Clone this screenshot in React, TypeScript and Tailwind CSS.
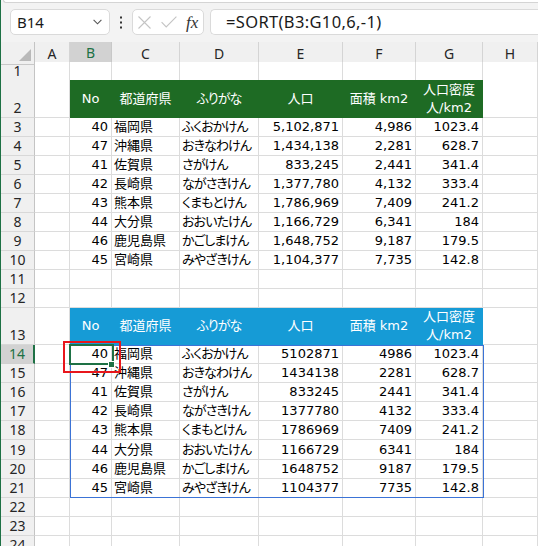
import React from "react";

const DATA = [
  ["40", "福岡県", "ふくおかけん", "5,102,871", "4,986", "1023.4"],
  ["47", "沖縄県", "おきなわけん", "1,434,138", "2,281", "628.7"],
  ["41", "佐賀県", "さがけん", "833,245", "2,441", "341.4"],
  ["42", "長崎県", "ながさきけん", "1,377,780", "4,132", "333.4"],
  ["43", "熊本県", "くまもとけん", "1,786,969", "7,409", "241.2"],
  ["44", "大分県", "おおいたけん", "1,166,729", "6,341", "184"],
  ["46", "鹿児島県", "かごしまけん", "1,648,752", "9,187", "179.5"],
  ["45", "宮崎県", "みやざきけん", "1,104,377", "7,735", "142.8"],
];

const G = "grid grid-cols-[34px_35px_42px_68px_79px_84px_73px_67px_1fr]";
const FONT =
  "font-['DejaVu_Sans','Noto_Sans_CJK_JP',sans-serif] [font-feature-settings:'palt']";

type Kind = "plain" | "green" | "blue";

function Cell({
  t = "",
  a = "l",
  k = "plain",
  kana = false,
}: {
  t?: string;
  a?: "l" | "r" | "c";
  k?: Kind;
  kana?: boolean;
}) {
  const base =
    k === "green"
      ? "bg-[#1e6b24] border-[#1e6b24] text-white"
      : k === "blue"
      ? "bg-[#169bd6] border-[#169bd6] text-white"
      : "bg-white border-[#dcdcdc] text-black";
  const al =
    a === "c"
      ? "justify-center text-center"
      : a === "r"
      ? "justify-end pr-[3px]"
      : "justify-start pl-[2px]";
  return (
    <div
      className={`flex items-center border-r border-b whitespace-nowrap text-[13px] leading-[18px] ${FONT} ${base} ${al} ${
        kana ? "tracking-[-0.9px]" : ""
      }`}
    >
      {t}
    </div>
  );
}

function RowHead({ n, active = false }: { n: number; active?: boolean }) {
  return (
    <div
      className={
        active
          ? "flex items-end justify-center border-b border-[#d0d0d0] border-r-2 border-r-[#1e7145] bg-[#d2d2d2] text-[#1e7145] font-['Noto_Sans',sans-serif] text-[14px] leading-[18px]"
          : "flex items-end justify-center border-b border-[#d8d8d8] border-r border-r-[#c4c4c4] bg-[#f0f0f0] text-[#262626] font-['Noto_Sans',sans-serif] text-[14px] leading-[18px]"
      }
    >
      {n}
    </div>
  );
}

function EmptyRow({ n, h }: { n: number; h: string }) {
  return (
    <div className={`${G} ${h}`}>
      <RowHead n={n} />
      <Cell />
      <Cell />
      <Cell />
      <Cell />
      <Cell />
      <Cell />
      <Cell />
      <Cell />
    </div>
  );
}

function HeaderRow({ n, k, h }: { n: number; k: Kind; h: string }) {
  return (
    <div className={`${G} ${h}`}>
      <RowHead n={n} />
      <Cell />
      <Cell t="No" a="c" k={k} />
      <Cell t="都道府県" a="c" k={k} />
      <Cell t="ふりがな" a="c" k={k} kana />
      <Cell t="人口" a="c" k={k} />
      <Cell t="面積 km2" a="c" k={k} />
      <div
        className={`flex flex-col items-center justify-center border-r border-b text-[13px] leading-[18px] text-white ${FONT} ${
          k === "green"
            ? "bg-[#1e6b24] border-[#1e6b24]"
            : "bg-[#169bd6] border-[#169bd6]"
        }`}
      >
        <span>人口密度</span>
        <span>人/km2</span>
      </div>
      <Cell />
    </div>
  );
}

function DataRow({
  n,
  r,
  h,
  raw = false,
  active = false,
}: {
  n: number;
  r: string[];
  h: string;
  raw?: boolean;
  active?: boolean;
}) {
  const clean = (s: string) => (raw ? s.replace(/,/g, "") : s);
  return (
    <div className={`${G} ${h}`}>
      <RowHead n={n} active={active} />
      <Cell />
      <Cell t={r[0]} a="r" />
      <Cell t={r[1]} />
      <Cell t={r[2]} kana />
      <Cell t={clean(r[3])} a="r" />
      <Cell t={clean(r[4])} a="r" />
      <Cell t={r[5]} a="r" />
      <Cell />
    </div>
  );
}

function ColHead({ l, active = false }: { l: string; active?: boolean }) {
  return (
    <div
      className={
        active
          ? "flex items-center justify-center bg-[#d2d2d2] border-r border-r-[#c8c8c8] border-b-2 border-b-[#1e7145] text-[#1e7145] font-['Noto_Sans',sans-serif] text-[14px]"
          : "flex items-center justify-center bg-[#f0f0f0] border-r border-r-[#d4d4d4] border-b border-b-[#c8c8c8] text-[#262626] font-['Noto_Sans',sans-serif] text-[14px]"
      }
    >
      {l}
    </div>
  );
}

export default function App() {
  return (
    <div className="flex w-[538px] h-[546px] overflow-hidden bg-[#f3f3f3]">
      <div className="w-px shrink-0 bg-[#1e7145]" />
      <div className="relative flex-1 flex flex-col">
        {/* formula bar */}
        <div className="h-[42px] shrink-0 bg-[#f3f3f3]">
          <div className="ml-[2px] h-[3px] bg-white border-b border-l border-[#d4d4d4] rounded-bl-[4px]" />
          <div className="flex items-center mt-[6px] h-[26px]">
            <div className="ml-[9px] w-[100px] h-[26px] shrink-0 bg-white border border-[#dadada] rounded-[5px] flex items-center justify-between pl-[6px] pr-[6px]">
              <span className="font-['Noto_Sans',sans-serif] text-[15px] text-[#1a1a1a] leading-none">
                B14
              </span>
              <svg width="9" height="6" viewBox="0 0 9 6" className="mr-px">
                <path d="M0.6 0.8 L4.5 4.8 L8.4 0.8" fill="none" stroke="#555" strokeWidth="1.1" />
              </svg>
            </div>
            <div className="w-[22px] shrink-0 flex justify-center">
              <svg width="4" height="13" viewBox="0 0 4 13">
                <rect x="1" y="0.5" width="2" height="2" fill="#333" />
                <rect x="1" y="5.5" width="2" height="2" fill="#333" />
                <rect x="1" y="10.5" width="2" height="2" fill="#333" />
              </svg>
            </div>
            <div className="w-[72px] h-[26px] shrink-0 bg-white border border-[#dadada] rounded-[5px] flex items-center">
              <svg width="13" height="13" viewBox="0 0 13 13" className="ml-[5px]">
                <path d="M0.5 0.5 L12.5 12.5 M12.5 0.5 L0.5 12.5" stroke="#c4c4c4" strokeWidth="1.1" fill="none" />
              </svg>
              <svg width="16" height="12" viewBox="0 0 16 12" className="ml-[10px]">
                <path d="M0.6 6.2 L5.2 11 L15.4 0.6" stroke="#c4c4c4" strokeWidth="1.1" fill="none" />
              </svg>
              <span className="ml-[9px] font-['Liberation_Serif',serif] italic text-[17px] leading-none text-[#333]">
                fx
              </span>
            </div>
            <div className="ml-[6px] flex-1 h-[26px] bg-white border border-r-0 border-[#dadada] rounded-l-[5px] flex items-center pl-[15px]">
              <span className="font-['Noto_Sans',sans-serif] text-[16.5px] tracking-[0.35px] text-[#1a1a1a] leading-none">
                =SORT(B3:G10,6,-1)
              </span>
            </div>
          </div>
        </div>

        {/* sheet */}
        <div className="flex-1 bg-white">
          <div className={`${G} h-[20px]`}>
            <div className="relative bg-[#f0f0f0] border-r border-r-[#c4c4c4] border-b border-b-[#c8c8c8]">
              <svg width="12" height="12" viewBox="0 0 12 12" className="absolute right-[3px] bottom-[3px]">
                <path d="M12 0 L12 12 L0 12 Z" fill="#b9b9b9" />
              </svg>
            </div>
            <ColHead l="A" />
            <ColHead l="B" active />
            <ColHead l="C" />
            <ColHead l="D" />
            <ColHead l="E" />
            <ColHead l="F" />
            <ColHead l="G" />
            <ColHead l="H" />
          </div>
          <EmptyRow n={1} h="h-[18px]" />
          <HeaderRow n={2} k="green" h="h-[38px]" />
          {DATA.map((r, i) => (
            <DataRow key={"a" + i} n={3 + i} r={r} h="h-[19px]" />
          ))}
          <EmptyRow n={11} h="h-[19px]" />
          <EmptyRow n={12} h="h-[19px]" />
          <HeaderRow n={13} k="blue" h="h-[37px]" />
          {DATA.map((r, i) => (
            <DataRow
              key={"b" + i}
              n={14 + i}
              r={r}
              h="h-[19.1px]"
              raw
              active={i === 0}
            />
          ))}
          <EmptyRow n={22} h="h-[19.1px]" />
          <EmptyRow n={23} h="h-[19.1px]" />
          <EmptyRow n={24} h="h-[19.1px]" />
        </div>

        {/* spill range border */}
        <div className="absolute left-[69px] top-[345px] w-[414px] h-[153px] border border-[#3b73d6] pointer-events-none" />
        {/* active cell */}
        <div className="absolute left-[68px] top-[344px] w-[45px] h-[21px] border-2 border-[#1e7145] pointer-events-none" />
        <div className="absolute left-[107px] top-[361px] w-[7px] h-[7px] bg-[#1e7145] border border-white pointer-events-none" />
        {/* annotation */}
        <div className="absolute left-[62px] top-[341px] w-[58px] h-[32px] border-2 border-[#e8161c] pointer-events-none" />
      </div>
    </div>
  );
}
